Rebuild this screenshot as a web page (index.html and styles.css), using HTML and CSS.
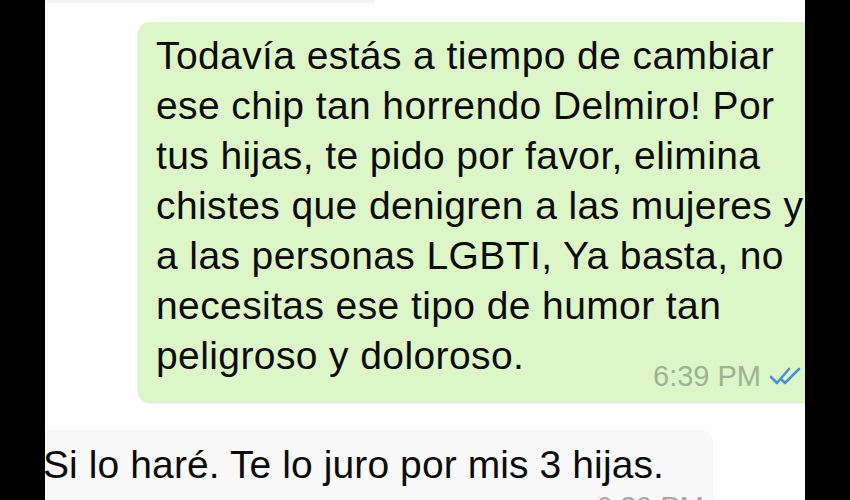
FILE: index.html
```html
<html>
<head>
    <link rel="stylesheet" href="styles.css">
</head>
<body>
    <div class="screen">
        <div class="prev-bubble"></div>
        <div class="row row-out">
            <div class="bubble bubble-out">
                <div class="line">Todavía estás a tiempo de cambiar</div>
                <div class="line">ese chip tan horrendo Delmiro! Por</div>
                <div class="line">tus hijas, te pido por favor, elimina</div>
                <div class="line">chistes que denigren a las mujeres y</div>
                <div class="line">a las personas LGBTI, Ya basta, no</div>
                <div class="line">necesitas ese tipo de humor tan</div>
                <div class="line last-line">
                    <span>peligroso y doloroso.</span>
                    <span class="meta">
                        <span class="time">6:39 PM</span>
                        <svg class="ticks" width="40" height="20" viewBox="0 0 40 20">
                            <path d="M2 11 L8 17 L20 3" fill="none" stroke="#4a8fd8" stroke-width="2.6" stroke-linecap="round" stroke-linejoin="round"/>
                            <path d="M13 14 L16 17 L30 3" fill="none" stroke="#4a8fd8" stroke-width="2.6" stroke-linecap="round" stroke-linejoin="round"/>
                        </svg>
                    </span>
                </div>
            </div>
        </div>
        <div class="row row-in">
            <div class="bubble bubble-in">
                <div class="line">Si lo haré. Te lo juro por mis 3 hijas.</div>
                <div class="meta meta-in">
                    <span class="time">6:39 PM</span>
                </div>
            </div>
        </div>
    </div>
</body>
</html>
```

FILE: styles.css
```css
body {
    margin: 0;
    padding: 0;
    background-color: #000;
    font-family: "Liberation Sans", Arial, sans-serif;
}
.screen {
    width: 760px;
    height: 500px;
    margin-left: 45px;
    background-color: #fefefe;
    overflow: hidden;
}
.prev-bubble {
    width: 330px;
    height: 3px;
    background-color: #f2f2f2;
    border-radius: 0 0 8px 0;
}
.row {
    display: flex;
}
.bubble {
    font-size: 39px;
    line-height: 50px;
    letter-spacing: 0.4px;
    color: #0c0c0c;
    box-shadow: 0px 1px 2px rgba(0, 0, 0, 0.14);
}
.line {
    white-space: nowrap;
}
.row-out {
    margin-top: 19px;
}
.bubble-out {
    margin-left: 93px;
    margin-right: -40px;
    flex: 1;
    padding: 9px 18px 21px 18px;
    background-color: #dcf6c8;
    border-radius: 12px;
}
.last-line {
    display: flex;
    justify-content: space-between;
    align-items: flex-end;
}
.meta {
    display: flex;
    align-items: center;
    gap: 8px;
    margin-bottom: -10px;
    margin-right: 18px;
    letter-spacing: 0;
}
.time {
    font-size: 29px;
    line-height: 30px;
    color: #9db394;
}
.ticks {
    display: block;
}
.row-in {
    margin-top: 28px;
}
.bubble-in {
    width: 651px;
    margin-left: -20px;
    padding: 10px 18px 10px 18px;
    background-color: #f9f9f9;
    border-radius: 12px;
    letter-spacing: 0.1px;
}
.meta-in {
    justify-content: flex-end;
    margin: 2px -10px 0 0;
}
.meta-in .time {
    color: #a8a8a8;
}
```
